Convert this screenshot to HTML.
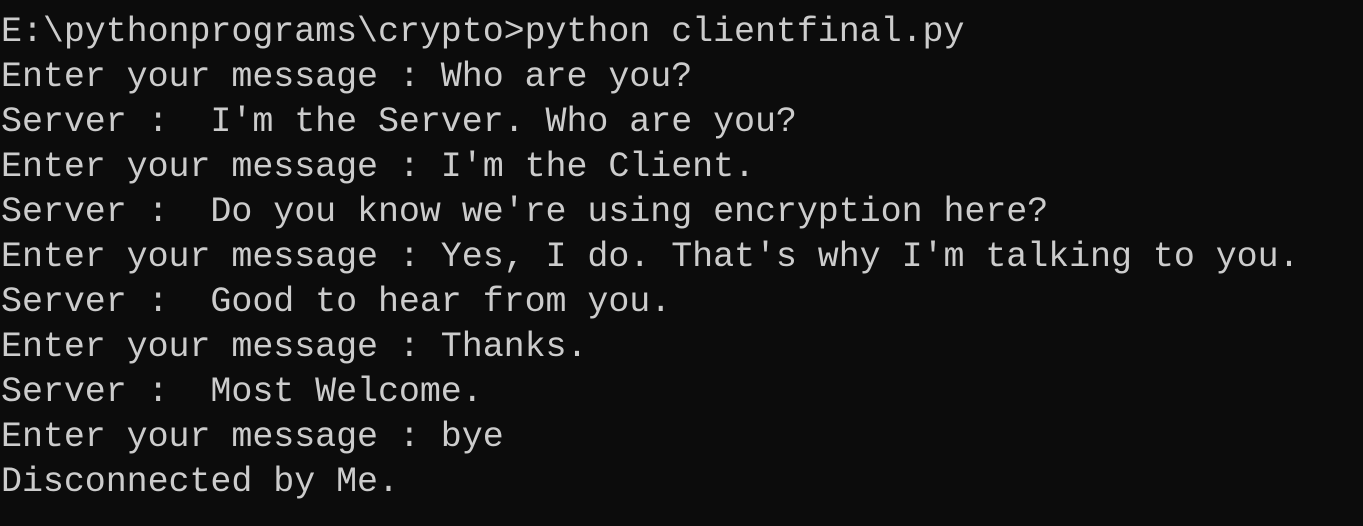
<!DOCTYPE html>
<html><head><style>
html,body{margin:0;padding:0;background:#0c0c0c;width:1363px;height:526px;overflow:hidden}
pre{margin:0;padding:10px 0 0 1px;font-family:"Liberation Mono",monospace;font-size:35px;line-height:45px;color:#cccccc;letter-spacing:-0.06px}
</style></head><body><pre>E:\pythonprograms\crypto&gt;python clientfinal.py
Enter your message : Who are you?
Server :  I'm the Server. Who are you?
Enter your message : I'm the Client.
Server :  Do you know we're using encryption here?
Enter your message : Yes, I do. That's why I'm talking to you.
Server :  Good to hear from you.
Enter your message : Thanks.
Server :  Most Welcome.
Enter your message : bye
Disconnected by Me.</pre></body></html>
